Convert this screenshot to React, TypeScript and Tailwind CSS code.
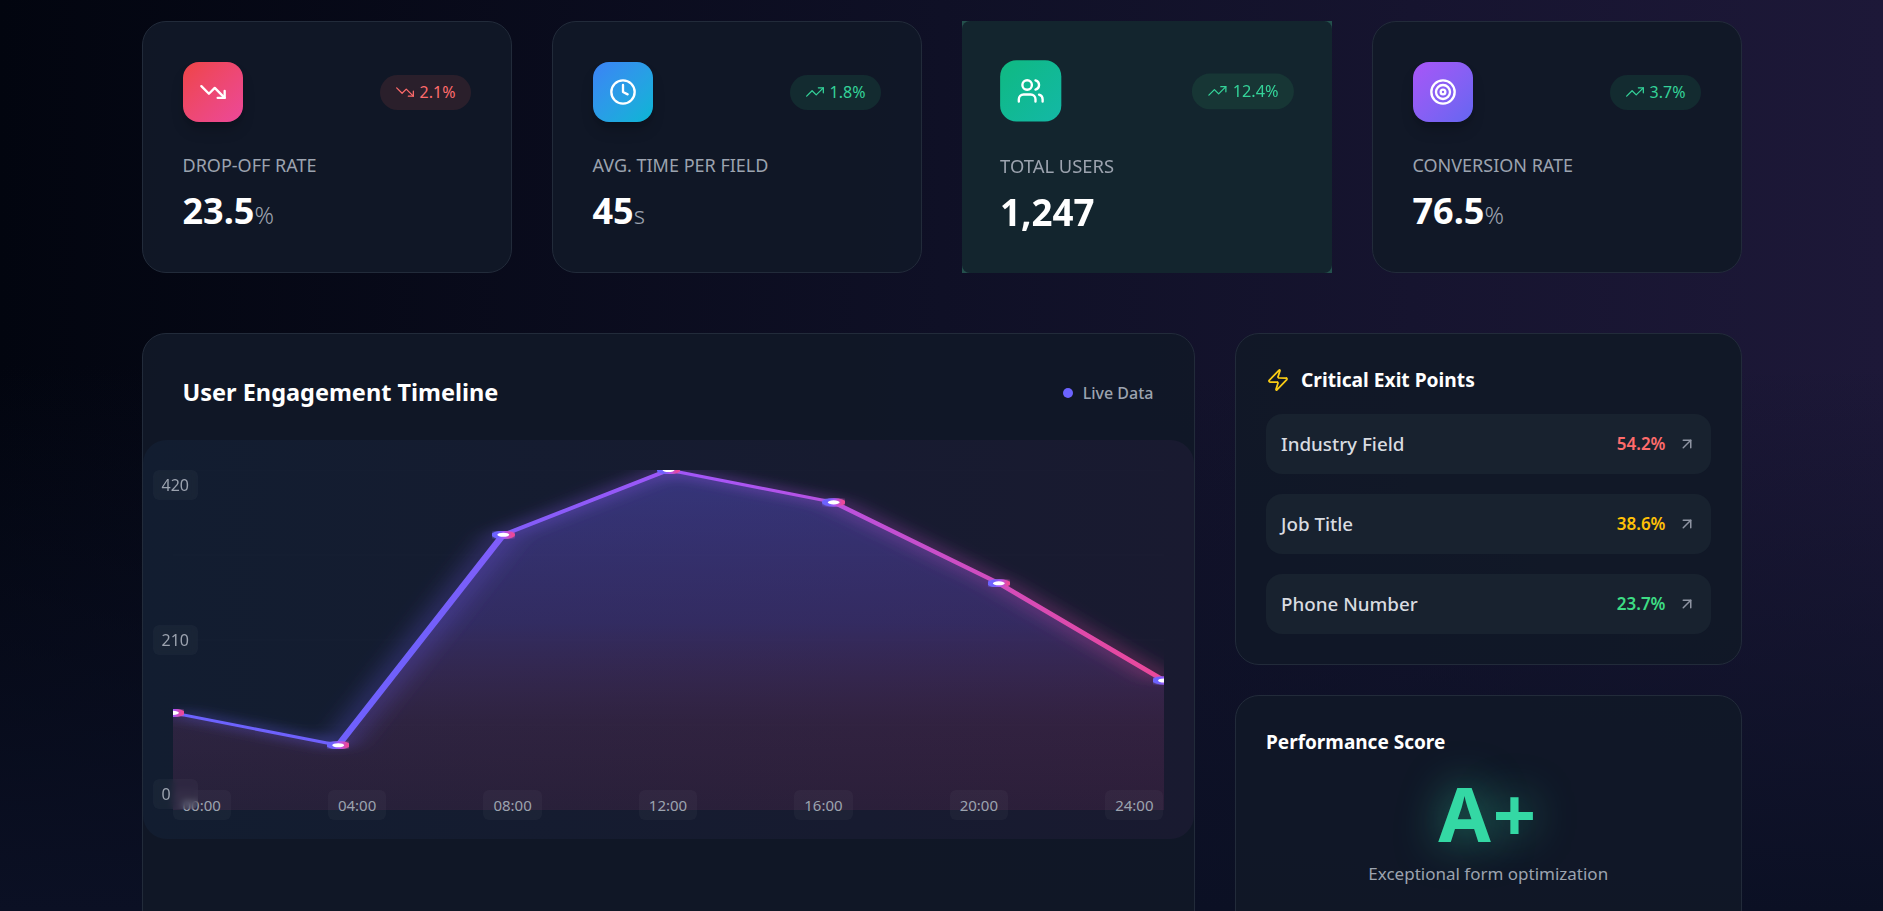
import { ArrowUpRight, Clock, Target, TrendingDown, TrendingUp, Users, Zap } from 'lucide-react';

const points = [
  { x: 0, y: 71.43 },
  { x: 16.67, y: 80.95 },
  { x: 33.33, y: 19.05 },
  { x: 50, y: 0 },
  { x: 66.67, y: 9.52 },
  { x: 83.33, y: 33.33 },
  { x: 100, y: 61.9 },
];
const linePath = points.map(p => `${p.x},${p.y}`).join(' ');
const areaPath = `0,100 ${linePath} 100,100`;

const StatCard = ({
  icon,
  tile,
  up,
  change,
  label,
  value,
  unit,
}: {
  icon: React.ReactNode;
  tile: string;
  up: boolean;
  change: string;
  label: string;
  value: string;
  unit: string;
}) => {
  return (
    <div className="h-[252px] rounded-3xl border border-[#222b3a] bg-[#111827]/95 p-10">
      <div className="mb-[31px] flex items-center justify-between">
        <div className={`flex h-[60px] w-[60px] items-center justify-center rounded-2xl text-white shadow-lg shadow-black/20 ${tile}`}>
          {icon}
        </div>
        <div
          className={`flex h-[35px] items-center gap-[5px] rounded-full px-[15px] text-base ${
            up ? 'bg-[#132b30] text-[#34d399]' : 'bg-[#2a1f2b] text-[#ff6b6b]'
          }`}
        >
          {up ? <TrendingUp size={20} strokeWidth={1.5} /> : <TrendingDown size={20} strokeWidth={1.5} />}
          {change}
        </div>
      </div>
      <p className="text-lg uppercase leading-6 text-[#9ca3af]">{label}</p>
      <p className="mt-[12px] text-4xl font-bold leading-[44px] text-white">
        {value}
        <span className="text-2xl font-light text-[#9ca3af]">{unit}</span>
      </p>
    </div>
  );
};

const ExitRow = ({ name, pct, color }: { name: string; pct: string; color: string }) => {
  return (
    <div className="flex h-[60px] items-center justify-between rounded-2xl bg-[#18222f] px-[15px]">
      <span className="text-[18.8px] font-medium text-[#d9dce1]">{name}</span>
      <div className="flex items-center gap-[12px]">
        <span className={`text-[17px] font-semibold ${color}`}>{pct}</span>
        <ArrowUpRight size={18} className="text-[#8f95a3]" />
      </div>
    </div>
  );
};

const Chart = () => {
  return (
    <div className="relative -mx-10 h-[399px] rounded-3xl bg-gradient-to-r from-[#121d30] to-[#191a30] p-[30px]">
      <div className="relative h-[340px] w-full">
        <svg className="absolute inset-0 h-full w-full" viewBox="0 0 100 100" preserveAspectRatio="none">
          <defs>
            <linearGradient id="line">
              <stop offset="0%" stopColor="#6c63ff" />
              <stop offset="25%" stopColor="#7160fb" />
              <stop offset="55%" stopColor="#a855f7" />
              <stop offset="100%" stopColor="#ec4899" />
            </linearGradient>
            <linearGradient id="area" x1="0" y1="0" x2="0" y2="1">
              <stop offset="0%" stopColor="#6c63ff" stopOpacity="0.36" />
              <stop offset="45%" stopColor="#7d55e0" stopOpacity="0.28" />
              <stop offset="75%" stopColor="#c04a9a" stopOpacity="0.15" />
              <stop offset="100%" stopColor="#ec4899" stopOpacity="0.09" />
            </linearGradient>
            <filter id="glow" x="-10%" y="-10%" width="120%" height="120%">
              <feGaussianBlur stdDeviation="1.6" result="b" />
              <feMerge>
                <feMergeNode in="b" />
                <feMergeNode in="SourceGraphic" />
              </feMerge>
            </filter>
            <filter id="dot">
              <feGaussianBlur stdDeviation="0.3" result="b" />
              <feMerge>
                <feMergeNode in="b" />
                <feMergeNode in="SourceGraphic" />
              </feMerge>
            </filter>
          </defs>
          {[0, 25, 50, 75, 100].map(y => (
            <line key={y} x1="0" x2="100" y1={y} y2={y} stroke="#ffffff" strokeOpacity="0.02" strokeWidth="0.3" />
          ))}
          <polygon points={areaPath} fill="url(#area)" />
          <polyline points={linePath} fill="none" stroke="url(#line)" strokeWidth="0.8" filter="url(#glow)" />
          {points.map(p => (
            <ellipse
              key={p.x}
              cx={p.x}
              cy={p.y}
              rx="0.9"
              ry="0.9"
              fill="#ffffff"
              stroke="url(#line)"
              strokeWidth="0.6"
              filter="url(#dot)"
            />
          ))}
        </svg>
        <div className="absolute -bottom-[10px] left-0 right-0 flex justify-between text-[15px] text-[#9ca3af]">
          {['00:00', '04:00', '08:00', '12:00', '16:00', '20:00', '24:00'].map(t => (
            <span key={t} className="flex h-[30px] items-center rounded-md bg-white/[0.03] px-[10px]">
              {t}
            </span>
          ))}
        </div>
      </div>
      <div className="absolute bottom-[30px] left-[10px] top-[30px] flex flex-col justify-between text-base text-[#9ca3af]">
        {['420', '210', '0'].map(t => (
          <span key={t} className="flex h-[30px] items-center rounded-md bg-white/[0.03] px-[9px] backdrop-blur-[3px]">
            {t}
          </span>
        ))}
      </div>
    </div>
  );
};

export default function App() {
  return (
    <div className="h-screen overflow-hidden bg-[linear-gradient(to_bottom,transparent_40%,#0b1024_100%),linear-gradient(to_right,#02050f_0%,#0f1026_50%,#1d1838_100%)] pt-[21px] font-['Noto_Sans',sans-serif]">
      <div className="mx-auto w-[1600px]">
        <div className="grid grid-cols-4 gap-10">
          <StatCard
            icon={<TrendingDown size={28} />}
            tile="bg-gradient-to-br from-[#ef4444] to-[#ec4899]"
            up={false}
            change="2.1%"
            label="Drop-off Rate"
            value="23.5"
            unit="%"
          />
          <StatCard
            icon={<Clock size={28} />}
            tile="bg-gradient-to-br from-[#3b82f6] to-[#06b6d4]"
            up
            change="1.8%"
            label="Avg. Time per Field"
            value="45"
            unit="s"
          />
          <div className="h-[252px] rounded-none bg-[#24504c]">
            <div className="h-full rounded-lg bg-[#13252e]">
              <div className="h-full scale-[1.02] p-[41px]">
                <div className="mb-[31px] flex items-center justify-between">
                  <div className="flex h-[60px] w-[60px] items-center justify-center rounded-2xl bg-gradient-to-br from-[#10b981] to-[#14b8a6] text-white">
                    <Users size={28} />
                  </div>
                  <div className="flex h-[35px] items-center gap-[5px] rounded-full bg-[#173635] px-[15px] text-base text-[#34d399]">
                    <TrendingUp size={20} strokeWidth={1.5} />
                    12.4%
                  </div>
                </div>
                <p className="text-lg uppercase leading-6 text-[#9ca3af]">Total Users</p>
                <p className="mt-[12px] text-4xl font-bold leading-[44px] text-white">1,247</p>
              </div>
            </div>
          </div>
          <StatCard
            icon={<Target size={28} />}
            tile="bg-gradient-to-br from-[#a855f7] to-[#6366f1]"
            up
            change="3.7%"
            label="Conversion Rate"
            value="76.5"
            unit="%"
          />
        </div>

        <div className="mt-[60px] grid grid-cols-[1053px_506.5px] gap-[40.5px]">
          <div className="h-[700px] rounded-3xl border border-[#222b3a] bg-[#111827]/95 px-10 pt-10">
            <div className="mb-[28px] flex h-[38px] items-center justify-between">
              <h2 className="text-[23.5px] font-bold text-white">User Engagement Timeline</h2>
              <div className="flex items-center gap-[10px] text-base font-medium text-[#9ca3af]">
                <span className="h-[10px] w-[10px] rounded-full bg-[#6c63ff]" />
                Live Data
              </div>
            </div>
            <Chart />
          </div>

          <div className="flex flex-col gap-[30px]">
            <div className="rounded-3xl border border-[#222b3a] bg-[#111827]/95 p-[30px]">
              <div className="mb-[18px] flex h-[32px] items-center gap-[11px]">
                <Zap size={24} strokeWidth={1.75} className="text-[#facc15]" />
                <h3 className="text-[19.2px] font-bold text-white">Critical Exit Points</h3>
              </div>
              <div className="flex flex-col gap-5">
                <ExitRow name="Industry Field" pct="54.2%" color="text-[#ff6b6b]" />
                <ExitRow name="Job Title" pct="38.6%" color="text-[#ffc107]" />
                <ExitRow name="Phone Number" pct="23.7%" color="text-[#3ddc84]" />
              </div>
            </div>

            <div className="h-[300px] rounded-3xl border border-[#222b3a] bg-[#111827]/95 p-[30px]">
              <h3 className="text-[19px] font-bold leading-8 text-white">Performance Score</h3>
              <div className="text-center">
                <p className="mt-[6px] text-[76px] font-bold leading-[97px] tracking-[2px] text-[#34d8a4] [text-shadow:0_0_44px_rgba(52,216,164,0.6)]">
                  A+
                </p>
                <p className="text-[17px] text-[#9ca3af]">Exceptional form optimization</p>
              </div>
            </div>
          </div>
        </div>
      </div>
    </div>
  );
}
